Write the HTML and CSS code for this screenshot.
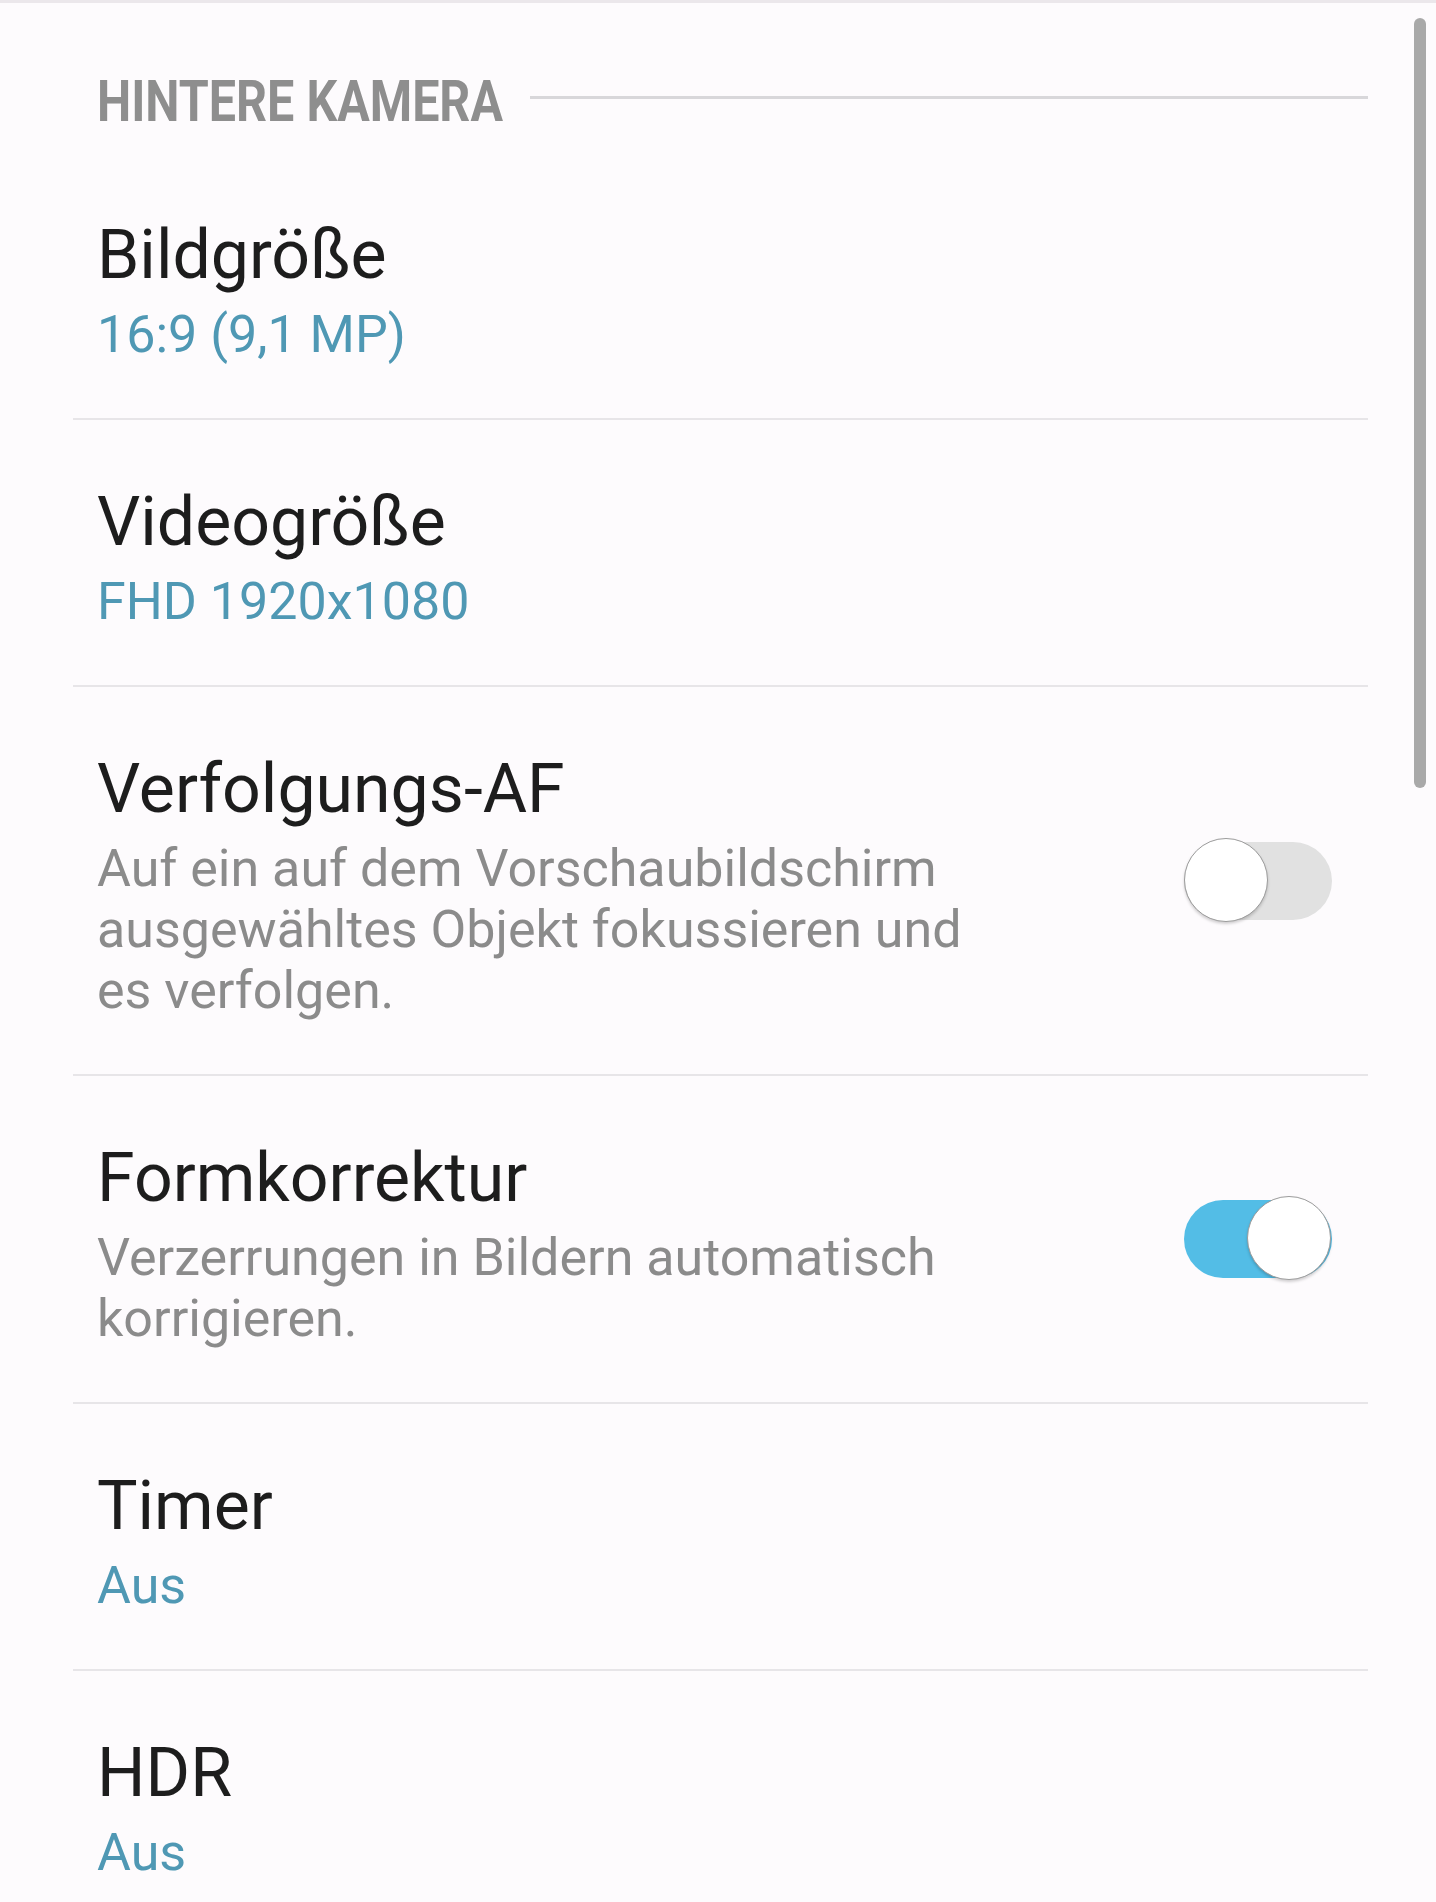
FILE: index.html
```html
<!DOCTYPE html>
<html lang="de">
<head>
    <meta charset="UTF-8">
    <meta name="viewport" content="width=device-width, initial-scale=1.0">
    <title>Kameraeinstellungen</title>
    <link rel="stylesheet" href="styles.css">
</head>
<body>

    <div class="page">
        <div class="section-head">
            <span class="section-title">HINTERE KAMERA</span>
            <span class="section-rule"></span>
        </div>

        <ul class="settings">
            <li class="item">
                <div class="item-text">
                    <div class="item-title">Bildgröße</div>
                    <div class="item-value">16:9 (9,1 MP)</div>
                </div>
            </li>
            <li class="item">
                <div class="item-text">
                    <div class="item-title">Videogröße</div>
                    <div class="item-value">FHD 1920x1080</div>
                </div>
            </li>
            <li class="item">
                <div class="item-text">
                    <div class="item-title">Verfolgungs-AF</div>
                    <div class="item-desc">Auf ein auf dem Vorschaubildschirm ausgewähltes Objekt fokussieren und es verfolgen.</div>
                </div>
                <span class="switch"></span>
            </li>
            <li class="item">
                <div class="item-text">
                    <div class="item-title">Formkorrektur</div>
                    <div class="item-desc">Verzerrungen in Bildern automatisch korrigieren.</div>
                </div>
                <span class="switch on"></span>
            </li>
            <li class="item">
                <div class="item-text">
                    <div class="item-title">Timer</div>
                    <div class="item-value">Aus</div>
                </div>
            </li>
            <li class="item">
                <div class="item-text">
                    <div class="item-title">HDR</div>
                    <div class="item-value">Aus</div>
                </div>
            </li>
        </ul>

        <div class="scrollbar"></div>
    </div>

</body>
</html>
```
FILE: styles.css
```css
body {
    font-family: Roboto, "Noto Sans", sans-serif;
    background-color: #fdfbfd;
    margin: 0;
    width: 100%;
}

.page {
    position: relative;
    border-top: 3px solid #ebe7eb;
}

/* section header with the rule running to the right */
.section-head {
    display: flex;
    align-items: center;
    padding: 68px 68px 22px 97px;
}

.section-title {
    flex-shrink: 0;
    width: 405px;
    white-space: nowrap;
    font-size: 58px;
    font-weight: 700;
    line-height: 60px;
    color: #8e8e8e;
    transform: scaleX(0.835);
    transform-origin: left center;
}

.section-rule {
    flex: 1;
    height: 3px;
    margin: 0 0 7px 28px;
    background-color: #d8d7da;
}

.settings {
    list-style: none;
    margin: 0 68px 0 73px;
    padding: 0;
}

.item {
    display: flex;
    align-items: center;
    padding: 62px 36px 53px 24px;
    border-bottom: 2px solid #e7e5e8;
}

.item-text {
    max-width: 900px;
}

.item-title {
    font-size: 68px;
    line-height: 80px;
    color: #1d1d1d;
}

.item-value,
.item-desc {
    margin-top: 9px;
    font-size: 52px;
    line-height: 61px;
}

.item-value {
    color: #4f98b4;
}

.item-desc {
    color: #8b8b8b;
}

/* toggle switch */
.switch {
    position: relative;
    flex-shrink: 0;
    width: 148px;
    height: 78px;
    margin-left: auto;
    margin-bottom: 9px;
    border-radius: 39px;
    background-color: #e1e1e1;
}

.switch::after {
    content: "";
    position: absolute;
    top: -4px;
    left: 0;
    width: 82px;
    height: 82px;
    border-radius: 50%;
    border: 1.5px solid #9c9c9c;
    background-color: #fff;
    box-shadow: 0 2px 3px rgba(0, 0, 0, 0.18);
}

.switch.on {
    background-color: #53bde6;
}

.switch.on::after {
    left: 63px;
}

.scrollbar {
    position: absolute;
    top: 15px;
    right: 10px;
    width: 12px;
    height: 770px;
    border-radius: 6px;
    background-color: #a9a9a9;
}
```
